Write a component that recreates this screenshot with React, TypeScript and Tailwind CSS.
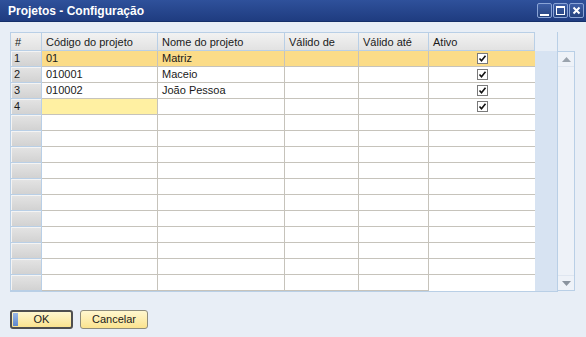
import React from "react";

const cols = [
  { label: "Código do projeto", w: "w-[116px]" },
  { label: "Nome do projeto", w: "w-[127px]" },
  { label: "Válido de", w: "w-[74px]" },
  { label: "Válido até", w: "w-[70px]" },
  { label: "Ativo", w: "w-[107px]" },
];

const rows = [
  { n: "1", code: "01", name: "Matriz", active: true },
  { n: "2", code: "010001", name: "Maceio", active: true },
  { n: "3", code: "010002", name: "João Pessoa", active: true },
  { n: "4", code: "", name: "", active: true },
];

function Check() {
  return (
    <span className="flex h-[11px] w-[11px] items-center justify-center border border-[#7a7a7a] bg-white">
      <svg width="9" height="9" viewBox="0 0 9 9">
        <path d="M1.5 4.5 L3.5 6.8 L7.5 1.8" stroke="#111" strokeWidth="1.6" fill="none" />
      </svg>
    </span>
  );
}

function RowHead({ n }: { n?: string }) {
  return (
    <div className="flex h-[16px] w-[31px] items-center border-r border-b border-[#b9cfe6] bg-gradient-to-b from-[#e4e4e4] to-[#d2d2d2] pl-[3px] shadow-[inset_1px_1px_0_#f4f4f4]">
      {n}
    </div>
  );
}

function WinBtn({ children }: { children: React.ReactNode }) {
  return (
    <div className="flex h-[15px] w-[15px] items-center justify-center rounded-[2px] border border-[#8aa4d6] bg-gradient-to-b from-[#3d5ea6] to-[#25437f]">
      {children}
    </div>
  );
}

export default function App() {
  const empty = Array.from({ length: 11 });
  return (
    <div
      className="flex h-[337px] w-[586px] flex-col bg-[#e8eef6] text-[11px] text-[#1a1a1a]"
      style={{ fontFamily: '"Liberation Sans", Arial, sans-serif' }}
    >
      {/* title bar */}
      <div className="flex h-[22px] items-center justify-between border-b border-[#15306a] bg-gradient-to-b from-[#2f519b] to-[#1f3c80] pl-[8px] pr-[2px]">
        <span className="text-[12px] font-bold text-white">Projetos - Configuração</span>
        <div className="flex gap-[1px]">
          <WinBtn>
            <span className="mt-[8px] h-[2px] w-[9px] bg-white" />
          </WinBtn>
          <WinBtn>
            <span className="h-[9px] w-[9px] border border-t-2 border-white" />
          </WinBtn>
          <WinBtn>
            <svg width="9" height="9" viewBox="0 0 9 9">
              <path d="M1.5 1.5 L7.5 7.5 M7.5 1.5 L1.5 7.5" stroke="white" strokeWidth="2" />
            </svg>
          </WinBtn>
        </div>
      </div>

      {/* grid */}
      <div className="flex pl-[10px] pt-[10px]">
        <div className="flex w-[548px] flex-col border-r border-b border-[#b9cfe6]">
          {/* header */}
          <div className="flex h-[19px]">
            <div className="flex w-[31px] items-center border border-r-0 border-[#b9cfe6] bg-gradient-to-b from-[#f2f2f2] to-[#e2e2e2] pl-[4px] pt-[1px]">
              #
            </div>
            {cols.map((c) => (
              <div
                key={c.label}
                className={`${c.w} flex items-center border border-r-0 border-[#b9cfe6] bg-gradient-to-b from-[#f2f2f2] to-[#e2e2e2] pl-[4px] pt-[1px] last:border-r`}
              >
                {c.label}
              </div>
            ))}
          </div>
          {/* body */}
          <div className="flex">
            <div className="flex w-[525px] flex-col border-l border-[#b9cfe6]">
              {rows.map((r, i) => (
                <div key={r.n} className={`flex ${i === 0 ? "bg-[#fbdc88]" : "bg-white"}`}>
                  <RowHead n={r.n} />
                  <div
                    className={`flex h-[16px] w-[116px] items-center border-r border-b border-[#c6c3bb] pl-[4px] ${
                      i === 3 ? "bg-[#fff0a2]" : ""
                    }`}
                  >
                    {r.code}
                  </div>
                  <div className="flex h-[16px] w-[127px] items-center border-r border-b border-[#c6c3bb] pl-[4px]">
                    {r.name}
                  </div>
                  <div className="h-[16px] w-[74px] border-r border-b border-[#c6c3bb]" />
                  <div className="h-[16px] w-[70px] border-r border-b border-[#c6c3bb]" />
                  <div className="flex h-[16px] w-[106px] items-center justify-center border-b border-[#c6c3bb] pl-[1px]">
                    <Check />
                  </div>
                </div>
              ))}
              {empty.map((_, i) => (
                <div key={i} className="flex bg-white">
                  <RowHead />
                  <div className="h-[16px] w-[116px] border-r border-b border-[#c6c3bb]" />
                  <div className="h-[16px] w-[127px] border-r border-b border-[#c6c3bb]" />
                  <div className="h-[16px] w-[74px] border-r border-b border-[#c6c3bb]" />
                  <div className="h-[16px] w-[70px] border-r border-b border-[#c6c3bb]" />
                  <div className={`h-[16px] w-[106px] ${i === 10 ? "" : "border-b border-[#c6c3bb]"}`} />
                </div>
              ))}
            </div>
            <div className="flex-1 bg-[#d7e3f2]" />
          </div>
        </div>

        {/* scrollbar */}
        <div className="mt-[19px] flex h-[240px] w-[17px] flex-col justify-between border border-l-0 border-[#b9cfe6] bg-[#eef2f8]">
          <div className="flex h-[15px] items-center justify-center border-b border-[#dfe6f0]">
            <svg width="9" height="5" viewBox="0 0 9 5">
              <path d="M0 5 L4.5 0 L9 5 Z" fill="#9aa3ad" />
            </svg>
          </div>
          <div className="flex h-[15px] items-center justify-center border-t border-[#dfe6f0]">
            <svg width="9" height="5" viewBox="0 0 9 5">
              <path d="M0 0 L4.5 5 L9 0 Z" fill="#8a939e" />
            </svg>
          </div>
        </div>
      </div>

      {/* buttons */}
      <div className="mt-[18px] flex gap-[7px] pl-[10px]">
        <button className="relative flex h-[19px] w-[63px] items-center justify-center overflow-hidden rounded-[3px] border-2 border-[#4f4f4f] bg-gradient-to-b from-[#fff7cf] to-[#fbe38e] text-[11px] text-[#1a1a1a]">
          <span className="absolute left-[1px] top-[1px] h-[13px] w-[5px] bg-gradient-to-b from-[#9bb9e6] to-[#5f87cc]" />
          OK
        </button>
        <button className="flex h-[19px] w-[68px] items-center justify-center rounded-[3px] border border-[#8f8d7c] bg-gradient-to-b from-[#fff7cf] to-[#fbe38e] text-[11px] text-[#1a1a1a]">
          Cancelar
        </button>
      </div>
    </div>
  );
}
